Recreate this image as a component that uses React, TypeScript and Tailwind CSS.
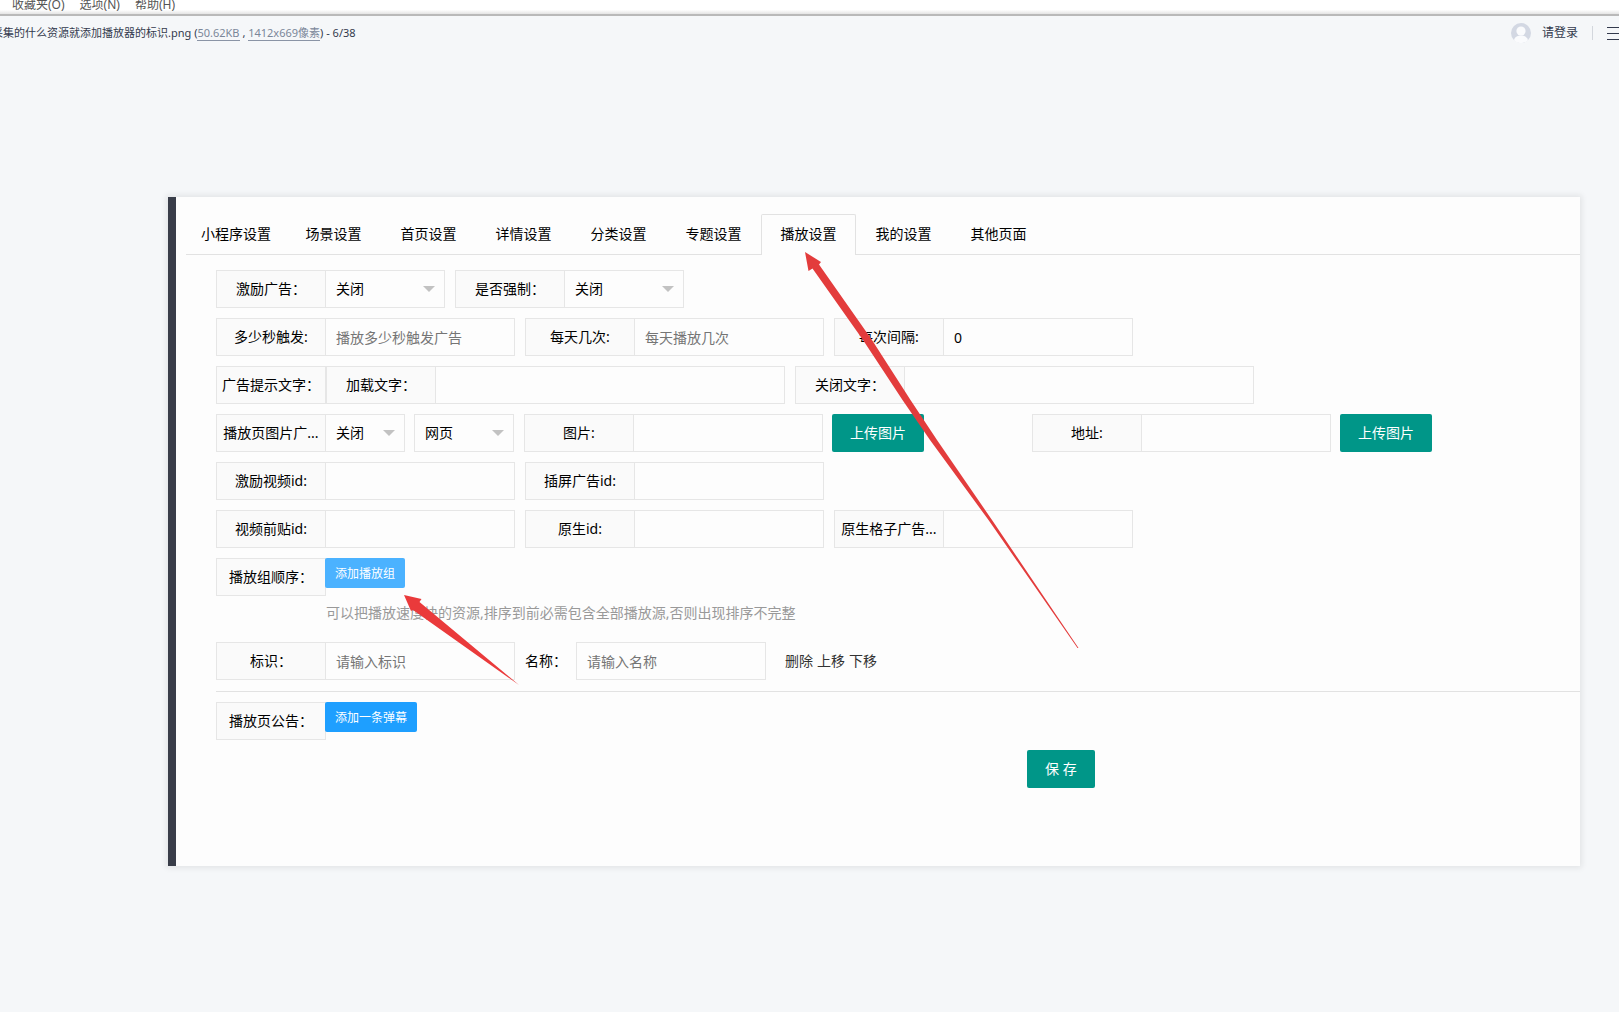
import React, { useId } from "react";

const tabs = ["小程序设置", "场景设置", "首页设置", "详情设置", "分类设置", "专题设置", "播放设置", "我的设置", "其他页面"];

const labelClass =
  "h-[38px] w-[110px] shrink-0 border border-[#e6e6e6] bg-[#fafafa] px-[5px] text-center leading-[36px] whitespace-nowrap overflow-hidden text-black";
const inputClass =
  "h-[38px] shrink-0 border border-[#e6e6e6] bg-[#fdfdfd] px-[10px] leading-5 text-black outline-none placeholder:text-[#757575]";
const greenButton =
  "h-[38px] shrink-0 rounded-[2px] bg-[#009688] px-[18px] leading-[38px] whitespace-nowrap text-white";

function Field({ label, width = "w-[190px]", placeholder, value }: { label: string; width?: string; placeholder?: string; value?: string }) {
  const id = useId();
  return (
    <div className="flex shrink-0">
      <label htmlFor={id} className={labelClass}>{label}</label>
      <input id={id} type="text" placeholder={placeholder} defaultValue={value} className={`${inputClass} -ml-px ${width}`} />
    </div>
  );
}

function Select({ id, width, value, name }: { id?: string; width: string; value: string; name?: string }) {
  return (
    <div className={`relative shrink-0 ${width}`}>
      <select id={id} aria-label={name} className={`${inputClass} w-full appearance-none`}>
        <option>{value}</option>
      </select>
      <span className="pointer-events-none absolute top-4 right-[10px] border-x-6 border-t-6 border-x-transparent border-t-[#c2c2c2]" />
    </div>
  );
}

function SelectField({ label, width, value }: { label: string; width: string; value: string }) {
  const id = useId();
  return (
    <div className="flex shrink-0">
      <label htmlFor={id} className={labelClass}>{label}</label>
      <div className="-ml-px"><Select id={id} width={width} value={value} /></div>
    </div>
  );
}

function Row({ children }: { children: React.ReactNode }) {
  return <div className="flex gap-[10px]">{children}</div>;
}

export default function App() {
  return (
    <div className="min-h-screen overflow-hidden bg-[#f5f7f9] font-['Noto_Sans','Noto_Sans_CJK_SC',sans-serif] text-[14px]">
      <nav className="flex h-4 items-end gap-[15px] overflow-hidden border-b-2 border-[#b9b9b9] bg-linear-to-b from-white from-70% to-[#e4e4e4] pb-px pl-3 text-[12px] leading-[16px] text-[#555]">
        <a href="#fav">收藏夹(O)</a>
        <a href="#opt">选项(N)</a>
        <a href="#help">帮助(H)</a>
      </nav>

      <header className="flex h-[34px] items-center justify-between overflow-hidden text-[#333a4d]">
        <p className="-ml-2 text-[11px] leading-4 whitespace-pre">
          采集的什么资源就添加播放器的标识.png (
          <a href="#size" className="border-b border-[#8a94a6] text-[#7b8799]">50.62KB</a>
          {" , "}
          <a href="#dim" className="border-b border-[#8a94a6] text-[#7b8799]">1412x669像素</a>
          ) - 6/38
        </p>
        <div className="flex shrink-0 items-center text-[12px]">
          <svg width="20" height="20" viewBox="0 0 20 20" className="mr-[11px]" aria-hidden="true">
            <circle cx="10" cy="10" r="10" fill="#d3d8e3" />
            <circle cx="10" cy="8" r="4.6" fill="#fafbfd" />
            <path d="M3 17.2C4 13.6 7 12.6 10 12.6s6 1 7 4.6A10 10 0 0 1 3 17.2Z" fill="#fafbfd" />
          </svg>
          <button type="button">请登录</button>
          <span className="ml-[14px] h-[14px] w-px bg-[#d3d7dd]" />
          <button type="button" aria-label="菜单" className="ml-[14px] flex w-3 flex-col gap-[5px]">
            <span className="h-px bg-[#333a4d]" />
            <span className="h-px bg-[#333a4d]" />
            <span className="h-px bg-[#333a4d]" />
          </button>
        </div>
      </header>

      <main className="relative mt-[147px] mr-[39px] ml-[168px] border-l-8 border-[#393d49] bg-[#fdfdfd] pt-[17px] pb-[78px] shadow-[0_0_6px_2px_rgba(0,0,0,0.08)]">
        <div role="tablist" className="ml-[10px] flex h-[41px] border-b border-[#e2e2e2]">
          {tabs.map((t) => (
            <button
              key={t}
              type="button"
              role="tab"
              aria-selected={t === "播放设置"}
              className={
                t === "播放设置"
                  ? "h-[41px] min-w-[95px] rounded-t-[2px] border border-b-0 border-[#e2e2e2] bg-[#fdfdfd] pb-[2px] leading-[38px] text-black"
                  : "h-[40px] min-w-[95px] px-[15px] leading-[40px] whitespace-nowrap text-black"
              }
            >
              {t}
            </button>
          ))}
        </div>

        <form className="mt-[15px] ml-10 flex flex-col gap-[10px]" onSubmit={(e) => e.preventDefault()}>
          <Row>
            <SelectField label="激励广告：" width="w-[120px]" value="关闭" />
            <SelectField label="是否强制：" width="w-[120px]" value="关闭" />
          </Row>
          <Row>
            <Field label="多少秒触发:" placeholder="播放多少秒触发广告" />
            <Field label="每天几次:" placeholder="每天播放几次" />
            <Field label="每次间隔:" value="0" />
          </Row>
          <Row>
            <div className="flex">
              <span className={labelClass}>广告提示文字：</span>
              <Field label="加载文字：" width="w-[350px]" />
            </div>
            <Field label="关闭文字：" width="w-[350px]" />
          </Row>
          <div className="flex gap-[9px]">
            <SelectField label="播放页图片广..." width="w-[80px]" value="关闭" />
            <Row>
              <Select name="类型" width="w-[100px]" value="网页" />
              <Field label="图片:" />
            </Row>
            <button type="button" className={`${greenButton} mr-[99px]`}>上传图片</button>
            <Field label="地址:" />
            <button type="button" className={greenButton}>上传图片</button>
          </div>
          <Row>
            <Field label="激励视频id:" />
            <Field label="插屏广告id:" />
          </Row>
          <Row>
            <Field label="视频前贴id:" />
            <Field label="原生id:" />
            <Field label="原生格子广告..." />
          </Row>
          <div className="flex">
            <span className={labelClass}>播放组顺序：</span>
            <div>
              <button type="button" className="-ml-px block h-[30px] rounded-[2px] bg-[#4bb2ff] px-[10px] pt-px text-[12px] text-white">添加播放组</button>
              <p className="mt-[15px] leading-5 text-[#999]">可以把播放速度快的资源,排序到前必需包含全部播放源,否则出现排序不完整</p>
            </div>
          </div>
          <div className="mt-[9px] flex gap-[10px] border-b border-[#e2e2e2] pb-[11px]">
            <Field label="标识：" placeholder="请输入标识" />
            <div className="flex gap-[9px]">
              <label htmlFor="name" className="leading-[38px] text-black">名称：</label>
              <input id="name" type="text" placeholder="请输入名称" className={`${inputClass} w-[190px]`} />
            </div>
            <div className="ml-[9px] flex gap-1 leading-[38px] text-[#333]">
              <a href="#delete">删除</a>
              <a href="#up">上移</a>
              <a href="#down">下移</a>
            </div>
          </div>
          <div className="flex">
            <span className={labelClass}>播放页公告：</span>
            <button type="button" className="-ml-px h-[30px] rounded-[2px] bg-[#1e9fff] px-[10px] pt-px text-[12px] text-white">添加一条弹幕</button>
          </div>
          <button type="submit" className={`${greenButton} ml-[811px] self-start whitespace-pre`}>保 存</button>
        </form>

        <svg className="pointer-events-none absolute top-[55px] left-[629px]" width="274" height="397" viewBox="0 0 274 397" aria-hidden="true">
          <path d="M0 0 16 10 14 12.5 67 88 105.5 148 132 188 187 268 273.5 396 272.5 396 183.5 268 125 188 97.5 148 58 88 7.5 16.5 3.5 19Z" fill="#e33c3c" />
        </svg>
        <svg className="pointer-events-none absolute top-[398px] left-[228px]" width="116" height="92" viewBox="0 0 116 92" aria-hidden="true">
          <path d="M0 0 17.5 4 15.5 7 115 90 9 15 7 16Z" fill="#ea3a3b" />
        </svg>
      </main>
    </div>
  );
}
